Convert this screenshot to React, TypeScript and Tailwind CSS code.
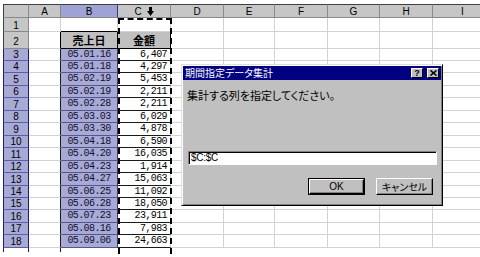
import React from "react";

const sans = "font-['Liberation_Sans','Noto_Sans_CJK_JP',sans-serif]";
const mono = "font-['Liberation_Mono','Noto_Sans_CJK_JP',monospace]";
const jp = "font-['Noto_Sans_CJK_JP',sans-serif] [font-feature-settings:'palt']";

const rows: [string, string, string][] = [
  ["3", "05.01.16", "6,407"],
  ["4", "05.01.18", "4,297"],
  ["5", "05.02.19", "5,453"],
  ["6", "05.02.19", "2,211"],
  ["7", "05.02.28", "2,211"],
  ["8", "05.03.03", "6,029"],
  ["9", "05.03.30", "4,878"],
  ["10", "05.04.18", "6,590"],
  ["11", "05.04.20", "16,035"],
  ["12", "05.04.23", "1,914"],
  ["13", "05.04.27", "15,063"],
  ["14", "05.06.25", "11,092"],
  ["15", "05.06.28", "18,050"],
  ["16", "05.07.23", "23,911"],
  ["17", "05.08.16", "7,983"],
  ["18", "05.09.06", "24,663"],
];

const heights = [
  "h-[12px]", "h-[12px]", "h-[13px]", "h-[12px]", "h-[13px]", "h-[12px]", "h-[13px]", "h-[12px]",
  "h-[13px]", "h-[12px]", "h-[13px]", "h-[12px]", "h-[12px]", "h-[13px]", "h-[12px]", "h-[13px]",
];

// columns D..I
const restCols = ["w-[53px]", "w-[51px]", "w-[53px]", "w-[52px]", "w-[53px]", "w-[60px]"];
const restLabels = ["D", "E", "F", "G", "H", "I"];

const blank = "shrink-0 border-r border-b border-[#d2d2d2] bg-white";
const hdr = "shrink-0 border-r border-b border-t border-[#8a8a8a] border-t-[#404040] bg-[#c6c6c6] flex items-center justify-center text-[10px] text-black";

function DownArrow() {
  return (
    <svg width="7" height="9" viewBox="0 0 7 9">
      <rect x="2" y="0" width="3" height="5" fill="#000" />
      <polygon points="0,4 7,4 3.5,9" fill="#000" />
    </svg>
  );
}

function TitleBtn({ children }: { children: React.ReactNode }) {
  return (
    <div className="w-[12px] h-[10px] bg-[#c0c0c0] border border-t-white border-l-white border-r-black border-b-black flex items-center justify-center">
      {children}
    </div>
  );
}

export default function App() {
  return (
    <div className={`relative w-[480px] h-[257px] overflow-hidden bg-white pt-[4px] pl-[3px] ${sans}`}>
      {/* header row */}
      <div className="flex h-[14px]">
        <div className={`w-[26px] border-l border-l-[#404040] ${hdr}`} />
        <div className={`w-[32px] ${hdr}`}>A</div>
        <div className={`w-[57px] ${hdr} !bg-[#9fa3d4] !border-r-[#3a3a7a]`}>B</div>
        <div className={`w-[53px] ${hdr} gap-[5px]`}>
          <span>C</span>
          <DownArrow />
        </div>
        {restCols.map((w, i) => (
          <div key={i} className={`${w} ${hdr}`}>{restLabels[i]}</div>
        ))}
      </div>

      {/* row 1 */}
      <div className="flex h-[14px]">
        <div className={`w-[26px] border-l border-l-[#404040] ${hdr} border-t-0 pt-[2px]`}>1</div>
        <div className={`w-[32px] ${blank}`} />
        <div className={`w-[57px] ${blank} border-b-black`} />
        <div className={`w-[53px] ${blank}`} />
        {restCols.map((w, i) => (
          <div key={i} className={`${w} ${blank}`} />
        ))}
      </div>

      {/* row 2 */}
      <div className="flex h-[17px]">
        <div className={`w-[26px] border-l border-l-[#404040] ${hdr} border-t-0 pt-[3px]`}>2</div>
        <div className={`w-[32px] ${blank} border-r-black`} />
        <div className="w-[57px] shrink-0 border-r border-b border-black bg-[#c0c0c0] flex items-center justify-center text-[11px] font-bold">
          <span className={jp}>売上日</span>
        </div>
        <div className="w-[53px] shrink-0 border-r border-b border-black bg-[#c0c0c0] flex items-center justify-center text-[11px] font-bold">
          <span className={jp}>金額</span>
        </div>
        {restCols.map((w, i) => (
          <div key={i} className={`${w} ${blank}`} />
        ))}
      </div>

      {/* rows 3-18 */}
      {rows.map(([n, d, v], i) => (
        <div key={n} className={`flex ${heights[i]}`}>
          <div className="w-[26px] shrink-0 border-l border-r border-b border-l-[#1c1c78] border-r-[#1c1c78] border-b-[#5c5ca8] bg-[#a8aad6] flex items-center justify-center text-[10px] leading-none pt-[1px]">
            {n}
          </div>
          <div className={`w-[32px] ${blank} border-r-[#1a1a1a]`} />
          <div className={`w-[57px] shrink-0 border-r border-b border-r-[#3a3a6a] border-b-[#56568a] bg-[#a8aad6] flex items-center justify-center text-[10px] leading-none tracking-[-0.6px] text-[#101030] ${mono}`}>
            {d}
          </div>
          <div className={`w-[53px] shrink-0 border-r border-b border-r-[#d2d2d2] border-b-[#1a1a1a] bg-white flex items-center justify-end pr-[3px] text-[10px] leading-none tracking-[-0.6px] ${mono}`}>
            {v}
          </div>
          {restCols.map((w, j) => (
            <div key={j} className={`${w} ${blank}`} />
          ))}
        </div>
      ))}

      {/* stub below row 18 */}
      <div className="flex h-[4px]">
        <div className="w-[26px] shrink-0 border-l border-r border-l-[#1c1c78] border-r-[#1c1c78] bg-white" />
        <div className="w-[32px] shrink-0 border-r border-r-[#1a1a1a]" />
      </div>

      {/* marching ants around column C */}
      <div className="absolute left-[118px] top-[18px] w-[54px] h-[236px] border-2 border-b-0 border-dashed border-black pointer-events-none" />

      {/* dialog */}
      <div className="absolute left-[181px] top-[64px] w-[262px] h-[142px] bg-[#c0c0c0] border border-t-[#dfdfdf] border-l-[#dfdfdf] border-r-black border-b-black shadow-[inset_1px_1px_0_#fff,inset_-1px_-1px_0_#808080] p-[1px] flex flex-col">
        <div className="h-[14px] bg-[#000080] flex items-center justify-between pl-[2px] pr-[2px]">
          <span className={`text-white text-[10px] leading-none ${jp}`}>期間指定データ集計</span>
          <div className="flex gap-[4px]">
            <TitleBtn>
              <span className="text-[9px] font-bold leading-none">?</span>
            </TitleBtn>
            <TitleBtn>
              <svg width="7" height="6" viewBox="0 0 7 6">
                <path d="M0.5 0.5 L6.5 5.5 M6.5 0.5 L0.5 5.5" stroke="#000" strokeWidth="1.6" />
              </svg>
            </TitleBtn>
          </div>
        </div>
        <div className={`mt-[10px] ml-[4px] h-[13px] text-[11px] leading-none text-black ${jp}`}>
          集計する列を指定してください。
        </div>
        <div className="mt-[48px] ml-[5px] mr-[4px] h-[14px] bg-white border border-t-[#808080] border-l-[#808080] border-r-white border-b-white shadow-[inset_1px_1px_0_#000] flex items-center pl-[2px] text-[10px] leading-none tracking-[-0.3px]">
          $C:$C
        </div>
        <div className="mt-[13px] flex justify-end gap-[11px] pr-[8px]">
          <div className="w-[57px] h-[17px] border border-black">
            <div className="w-full h-full border border-t-white border-l-white border-r-black border-b-black shadow-[inset_-1px_-1px_0_#808080] flex items-center justify-center text-[10px] leading-none">
              OK
            </div>
          </div>
          <div className="w-[57px] h-[17px] border border-t-white border-l-white border-r-black border-b-black shadow-[inset_-1px_-1px_0_#808080] flex items-center justify-center text-[10px] leading-none">
            <span className={jp}>キャンセル</span>
          </div>
        </div>
      </div>
    </div>
  );
}
